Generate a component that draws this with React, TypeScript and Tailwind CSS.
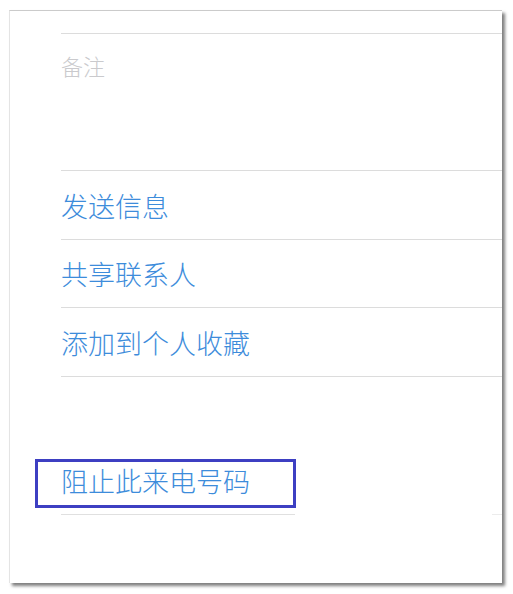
import React from "react";

const rows = ["发送信息", "共享联系人", "添加到个人收藏"];

export default function App() {
  return (
    <div
      className="w-[513px] h-[594px] bg-white pt-[10px] pl-[9px]"
      style={{ fontFamily: '"Noto Sans CJK SC", "Noto Sans", sans-serif' }}
    >
      <div className="relative w-[493px] h-[573px] bg-white border-t border-l border-t-[#cbcbcb] border-l-[#e4e4e4] shadow-[3px_3px_3px_rgba(0,0,0,0.5)]">
        <div className="pl-[51px] pt-[22px] flex flex-col">
          <div className="h-[137px] border-t border-[#dcdcdc] pt-[20px]">
            <div className="text-[22px] leading-[22px] font-light text-[#cacacd]">备注</div>
          </div>
          {rows.map((r, i) => (
            <div
              key={r}
              className={`${i === 1 ? "h-[68px]" : "h-[69px]"} border-t border-[#dcdcdc] flex items-center`}
            >
              <span className="text-[27px] leading-[27px] font-light text-[#3d8cdb]">{r}</span>
            </div>
          ))}
          <div className="h-[138px] border-t border-[#dcdcdc] pt-[90px]">
            <div className="text-[27px] leading-[27px] font-light text-[#3d8cdb]">阻止此来电号码</div>
          </div>
          <div className="flex">
            <div className="w-[234px] h-px bg-[#e0e0e0]" />
            <div className="flex-1" />
            <div className="w-[10px] h-px bg-[#ececec]" />
          </div>
        </div>
        <div className="absolute left-[25px] top-[448px] w-[261px] h-[49px] border-[3px] border-[#3d3fc2]" />
      </div>
    </div>
  );
}
